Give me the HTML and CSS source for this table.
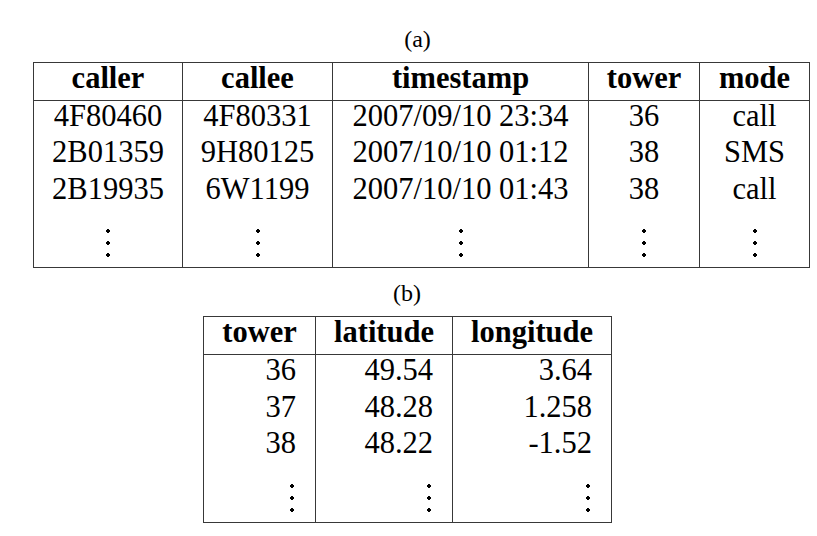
FILE: index.html
```html
<!DOCTYPE html>
<html lang="en">
<head>
    <meta charset="UTF-8">
    <meta name="viewport" content="width=device-width, initial-scale=1.0">
    <title>Call records and tower locations</title>
    <link rel="stylesheet" href="styles.css">
</head>
<body>
    <!-- (a) call detail records -->
    <div class="figure figure-a">
        <p class="caption">(a)</p>
        <table class="data calls">
            <colgroup>
                <col class="c-caller">
                <col class="c-callee">
                <col class="c-time">
                <col class="c-tower">
                <col class="c-mode">
            </colgroup>
            <thead>
                <tr>
                    <th>caller</th>
                    <th>callee</th>
                    <th>timestamp</th>
                    <th>tower</th>
                    <th>mode</th>
                </tr>
            </thead>
            <tbody>
                <tr>
                    <td>4F80460</td>
                    <td>4F80331</td>
                    <td>2007/09/10 23:34</td>
                    <td>36</td>
                    <td>call</td>
                </tr>
                <tr>
                    <td>2B01359</td>
                    <td>9H80125</td>
                    <td>2007/10/10 01:12</td>
                    <td>38</td>
                    <td>SMS</td>
                </tr>
                <tr>
                    <td>2B19935</td>
                    <td>6W1199</td>
                    <td>2007/10/10 01:43</td>
                    <td>38</td>
                    <td>call</td>
                </tr>
                <tr class="more">
                    <td><span class="vdots"></span></td>
                    <td><span class="vdots"></span></td>
                    <td><span class="vdots"></span></td>
                    <td><span class="vdots"></span></td>
                    <td><span class="vdots"></span></td>
                </tr>
            </tbody>
        </table>
    </div>

    <!-- (b) tower coordinates -->
    <div class="figure figure-b">
        <p class="caption">(b)</p>
        <table class="data towers">
            <colgroup>
                <col class="c-id">
                <col class="c-lat">
                <col class="c-lon">
            </colgroup>
            <thead>
                <tr>
                    <th>tower</th>
                    <th>latitude</th>
                    <th>longitude</th>
                </tr>
            </thead>
            <tbody>
                <tr>
                    <td>36</td>
                    <td>49.54</td>
                    <td>3.64</td>
                </tr>
                <tr>
                    <td>37</td>
                    <td>48.28</td>
                    <td>1.258</td>
                </tr>
                <tr>
                    <td>38</td>
                    <td>48.22</td>
                    <td>-1.52</td>
                </tr>
                <tr class="more">
                    <td><span class="vdots"></span></td>
                    <td><span class="vdots"></span></td>
                    <td><span class="vdots"></span></td>
                </tr>
            </tbody>
        </table>
    </div>
</body>
</html>
```

FILE: styles.css
```css
body {
    margin: 0;
    background-color: #fff;
    color: #000;
    font-family: "Liberation Serif", "Times New Roman", serif;
}

/* figure blocks */
.figure-a {
    width: 776px;
    margin-left: 33px;
    padding-top: 27px;
}
.figure-a .caption {
    padding-right: 7px;
}
.figure-b {
    width: 408px;
    margin: 13px 0 0 203px;
}
.caption {
    margin: 0 0 11px;
    font-size: 24px;
    line-height: 24px;
    text-align: center;
}

/* tables */
.data {
    width: 100%;
    border-collapse: collapse;
    table-layout: fixed;
    border: 1px solid #383838;
    font-size: 30.5px;
}
.data th,
.data td {
    padding: 0 0 6.1px;
    line-height: 30.5px;
    border-left: 1px solid #383838;
    border-right: 1px solid #383838;
    white-space: nowrap;
    text-align: center;
}
.data thead th {
    font-weight: bold;
    border-bottom: 1px solid #383838;
}
.towers td {
    text-align: right;
    padding-right: 19px;
}

.c-caller { width: 149px; }
.c-callee { width: 150px; }
.c-time { width: 256px; }
.c-tower { width: 111px; }
.c-mode { width: 110px; }

.c-id { width: 112px; }
.c-lat { width: 137px; }
.c-lon { width: 159px; }

/* vertical dots row */
.data .more td {
    padding-top: 15px;
    line-height: 0;
}
.vdots {
    display: block;
    width: 8px;
    height: 36px;
    margin: 0 auto;
    background: radial-gradient(circle, #000 1.6px, transparent 2.1px) 0 0 / 8px 12px repeat-y;
}
.towers .vdots {
    margin-right: 0;
}
```
